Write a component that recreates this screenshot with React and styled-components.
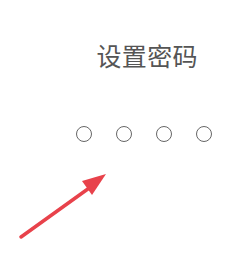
import React from "react";
import styled, { createGlobalStyle } from "styled-components";

const GlobalStyle = createGlobalStyle`
  html, body {
    margin: 0;
    padding: 0;
    background: #ffffff;
  }
  body {
    font-family: "Noto Sans CJK SC", "Noto Sans", sans-serif;
  }
`;

const Screen = styled.div`
  position: relative;
  width: 236px;
  height: 262px;
  background: #ffffff;
  overflow: hidden;
  display: flex;
  flex-direction: column;
  align-items: flex-end;
`;

const Title = styled.h1`
  margin: 39px 38px 0 0;
  font-size: 25px;
  font-weight: 400;
  line-height: 32px;
  color: #555555;
  letter-spacing: 0.4px;
`;

const Dots = styled.div`
  display: flex;
  gap: 24px;
  margin: 55px 24px 0 0;
`;

const Dot = styled.span`
  width: 16px;
  height: 16px;
  box-sizing: border-box;
  border: 1.6px solid #666666;
  border-radius: 50%;
`;

const Arrow = styled.svg`
  position: absolute;
  left: 0;
  top: 160px;
`;

const App = () => {
  return (
    <>
      <GlobalStyle />
      <Screen>
        <Title>设置密码</Title>
        <Dots>
          {[0, 1, 2, 3].map((i) => (
            <Dot key={i} />
          ))}
        </Dots>
        <Arrow width="120" height="90" viewBox="0 0 120 90">
          <line
            x1="21"
            y1="77"
            x2="92"
            y2="26"
            stroke="#e8424b"
            strokeWidth="3.5"
            strokeLinecap="round"
          />
          <polygon points="106,14 82,21 92,35" fill="#e8424b" />
        </Arrow>
      </Screen>
    </>
  );
};

export default App;
